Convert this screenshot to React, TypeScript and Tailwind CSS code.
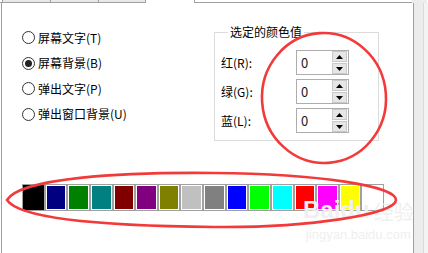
import React from "react";

const swatches = [
  "#000000", "#000080", "#008000", "#008080", "#800000", "#800080", "#808000", "#c0c0c0",
  "#808080", "#0000ff", "#00ff00", "#00ffff", "#ff0000", "#ff00ff", "#ffff00", "",
];

const radios = [
  { label: "屏幕文字(T)", checked: false },
  { label: "屏幕背景(B)", checked: true },
  { label: "弹出文字(P)", checked: false },
  { label: "弹出窗口背景(U)", checked: false },
];

const fields = ["红(R):", "绿(G):", "蓝(L):"];

function Arrow({ up }: { up: boolean }) {
  return (
    <svg width="7" height="4" viewBox="0 0 7 4">
      {up ? <polygon points="3.5,0 7,4 0,4" fill="#000" /> : <polygon points="0,0 7,0 3.5,4" fill="#000" />}
    </svg>
  );
}

function Spin() {
  return (
    <div className="flex h-[25px] w-[53px] items-center border border-[#adadad] bg-white">
      <span className="flex-1 pl-[4px] text-[13px] leading-none text-[#1a1a1a]">0</span>
      <div className="mr-[1px] flex h-[23px] w-[15px] flex-col">
        <div className="flex h-[11px] items-center justify-center border border-[#c9c9c9] bg-[#e6e6e6]">
          <Arrow up />
        </div>
        <div className="mt-[1px] flex h-[11px] items-center justify-center border border-[#c9c9c9] bg-[#e6e6e6]">
          <Arrow up={false} />
        </div>
      </div>
    </div>
  );
}

export default function App() {
  return (
    <div
      className="relative h-[253px] w-[428px] overflow-hidden bg-white text-[12px] text-black"
      style={{ fontFamily: '"Noto Sans CJK SC", "Noto Sans", sans-serif' }}
    >
      {/* tab strip */}
      <div className="flex h-[3px]">
        <div className="w-[2px] border-b border-[#a0a0a0]" />
        <div className="w-[48px] border-b border-l border-[#a0a0a0] bg-[#e8e8e8]" />
        <div className="w-[48px] border-b border-l border-[#a0a0a0] bg-[#e8e8e8]" />
        <div className="w-[48px] border-b border-l border-r border-[#a0a0a0] bg-[#e8e8e8]" />
        <div className="w-[48px] bg-white" />
        <div className="w-[218px] border-b border-l border-[#a0a0a0] bg-white" />
        <div className="w-[15px] bg-[#ececec]" />
      </div>

      <div className="flex h-[250px]">
        {/* panel */}
        <div className="ml-[1px] flex w-[413px] flex-col border-l border-r border-[#a0a0a0] bg-white">
          <div className="flex pt-[21px]">
            <div className="ml-[20px] mt-[1px] flex w-[192px] flex-col">
              {radios.map((r) => (
                <div key={r.label} className="flex h-[25.5px] items-center">
                  <span className="flex h-[13px] w-[13px] items-center justify-center rounded-full border border-[#333] bg-white">
                    {r.checked && <span className="h-[7px] w-[7px] rounded-full bg-[#222]" />}
                  </span>
                  <span className="ml-[3px] leading-none">{r.label}</span>
                </div>
              ))}
            </div>
            <fieldset className="w-[165px] border border-[#dcdcdc] pb-[7px] pl-[6px]">
              <legend className="ml-[7px] px-[2px] text-[12px] leading-[16px]">选定的颜色值</legend>
              <div className="mt-[10px] flex flex-col gap-[4px]">
                {fields.map((f) => (
                  <div key={f} className="flex h-[25px] items-center">
                    <span className="w-[75px] leading-none">{f}</span>
                    <Spin />
                  </div>
                ))}
              </div>
            </fieldset>
          </div>

          <div className="ml-[20px] mt-[43px] grid h-[27px] w-[362px] grid-cols-16">
            {swatches.map((c, i) => (
              <div key={i} className="border border-[#a0a0a0]">
                <div
                  className={i === 0 ? "h-full w-full border border-black" : "h-full w-full border border-white"}
                  style={{ backgroundColor: c || "#ffffff" }}
                />
              </div>
            ))}
          </div>
        </div>
        {/* right gutter */}
        <div className="flex w-[14px] bg-[#ececec]">
          <div className="ml-[9px] w-[1px] bg-[#dadada]" />
          <div className="flex-1 bg-[#f3f3f3]" />
        </div>
      </div>

      {/* watermark */}
      <div className="pointer-events-none absolute left-[303px] top-[198px] flex flex-col items-center text-[#efefef]">
        <div className="flex items-end">
          <span className="text-[24px] font-bold leading-none" style={{ fontFamily: '"Liberation Sans", sans-serif' }}>
            Bai
          </span>
          <span className="text-[24px] font-bold leading-none" style={{ fontFamily: '"Liberation Sans", sans-serif' }}>
            du
          </span>
          <span className="ml-[4px] text-[20px] leading-none">经验</span>
        </div>
        <span className="mt-[6px] text-[13px] leading-none" style={{ fontFamily: '"Liberation Sans", sans-serif' }}>
          jingyan.baidu.com
        </span>
      </div>

      {/* red annotations */}
      <svg className="pointer-events-none absolute left-0 top-0" width="428" height="253" viewBox="0 0 428 253">
        <ellipse cx="324" cy="98" rx="62" ry="65" fill="none" stroke="#f23a3a" strokeWidth="2.6" transform="rotate(-4 324 98)" />
        <path
          d="M 7 200 C 20 178, 120 172, 214 173 C 320 174, 396 186, 396 200 C 396 214, 310 228, 214 227 C 110 226, 20 220, 7 200 Z"
          fill="none"
          stroke="#f23a3a"
          strokeWidth="2.6"
        />
      </svg>
    </div>
  );
}
